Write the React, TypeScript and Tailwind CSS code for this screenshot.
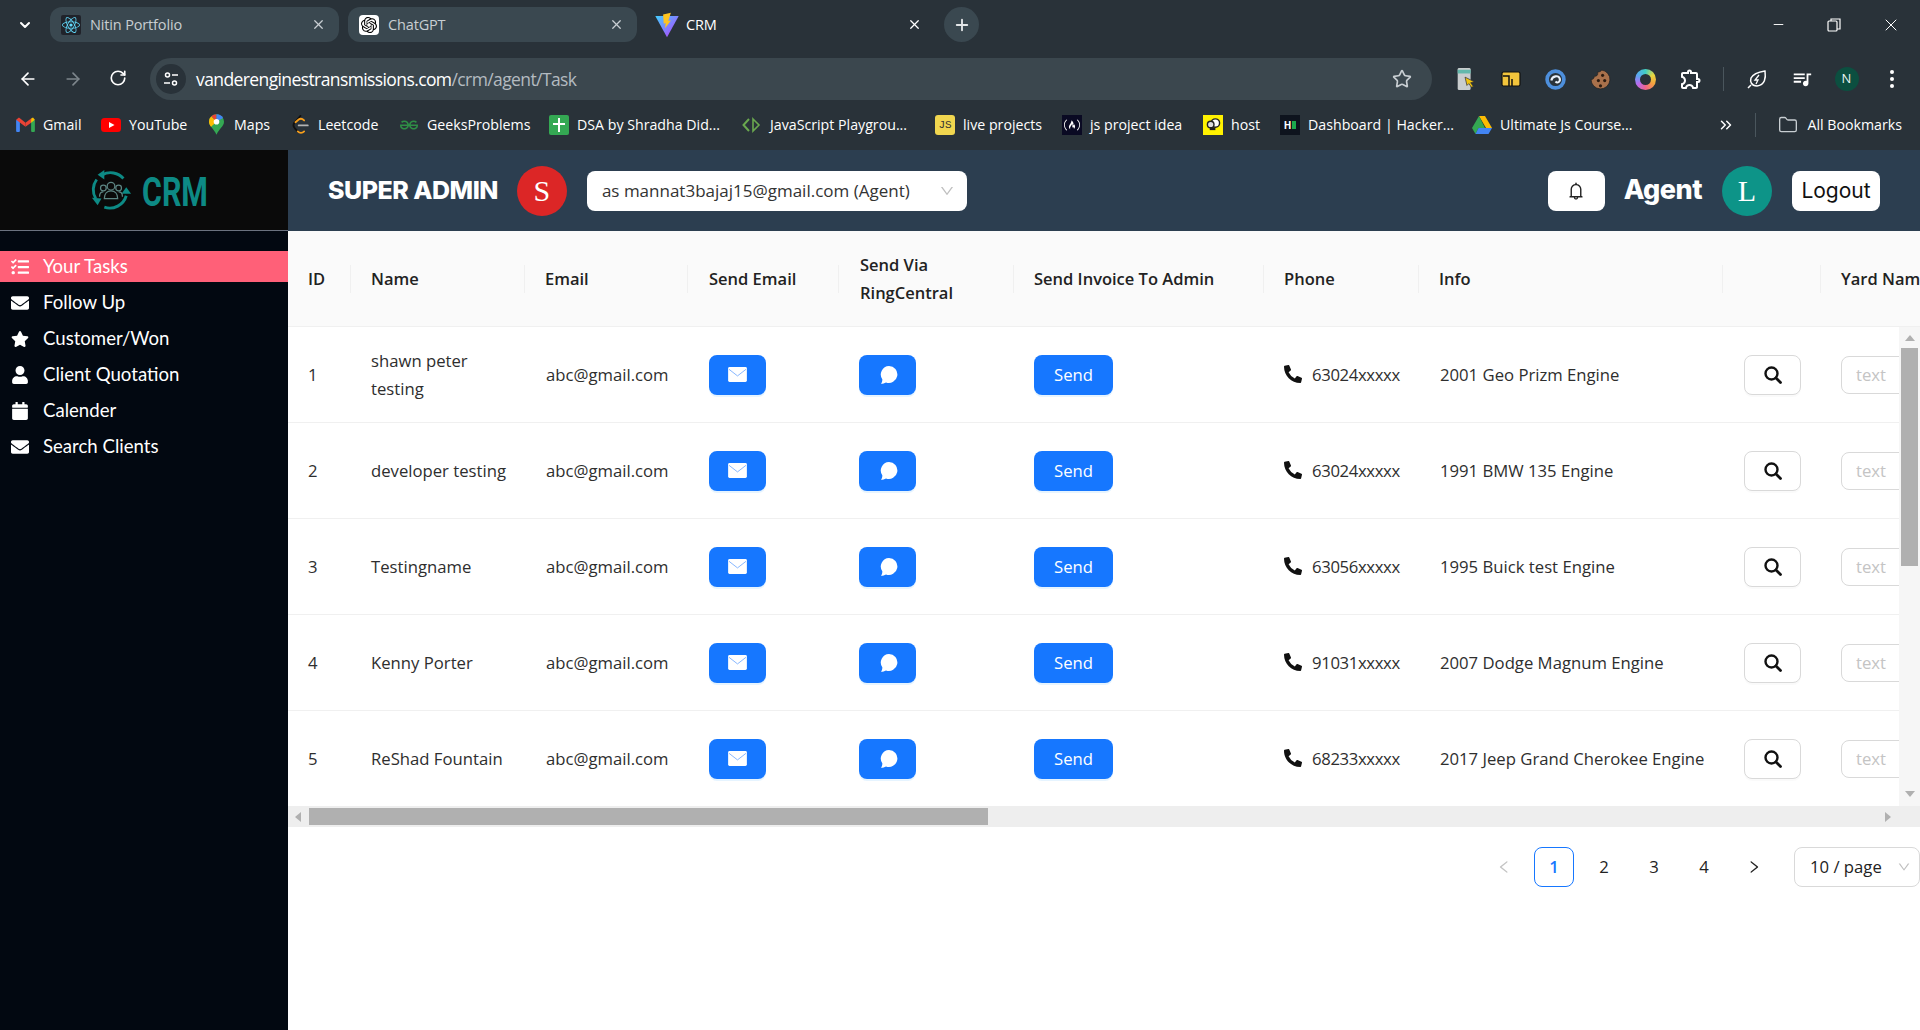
import { ArrowLeft, ArrowRight, RotateCw, X, Plus, Star, Minus, Folder, ChevronDown, ChevronsRight } from "lucide-react";
import { AiOutlineBell, AiOutlineDown, AiOutlineLeft, AiOutlineRight } from "react-icons/ai";
import { FaTasks, FaEnvelope, FaStar, FaUser, FaCalendar, FaPhoneAlt, FaReact } from "react-icons/fa";
import { MdOutlineExtension, MdQueueMusic } from "react-icons/md";
import { SiOpenai, SiGeeksforgeeks, SiFreecodecamp } from "react-icons/si";
import type { ReactNode } from "react";

const UI = "font-['Open_Sans',sans-serif]";

const rows = [
  { id: 1, name: "shawn peter testing", phone: "63024xxxxx", info: "2001 Geo Prizm Engine" },
  { id: 2, name: "developer testing", phone: "63024xxxxx", info: "1991 BMW 135 Engine" },
  { id: 3, name: "Testingname", phone: "63056xxxxx", info: "1995 Buick test Engine" },
  { id: 4, name: "Kenny Porter", phone: "91031xxxxx", info: "2007 Dodge Magnum Engine" },
  { id: 5, name: "ReShad Fountain", phone: "68233xxxxx", info: "2017 Jeep Grand Cherokee Engine" },
];

const menu = [
  { label: "Your Tasks", icon: FaTasks, active: true },
  { label: "Follow Up", icon: FaEnvelope },
  { label: "Customer/Won", icon: FaStar },
  { label: "Client Quotation", icon: FaUser },
  { label: "Calender", icon: FaCalendar },
  { label: "Search Clients", icon: FaEnvelope },
];

const GRID = "grid grid-cols-[63px_174px_163px_151px_175px_250px_155px_304px_98px_200px]";

function ViteIcon() {
  return (
    <svg viewBox="0 0 20 20" className="h-[26px] w-[26px] shrink-0">
      <defs>
        <linearGradient id="vite" x1="0" y1="0" x2="1" y2="1">
          <stop offset="0" stopColor="#41d1ff" />
          <stop offset="1" stopColor="#bd34fe" />
        </linearGradient>
      </defs>
      <polygon points="1,3 19,3 10,19.5" fill="url(#vite)" />
      <polygon points="13,0.5 7,2 7.5,9 9,8.5 8.5,12.5 13,6.5 11,6.8" fill="#ffc41f" />
    </svg>
  );
}

function GmailIcon() {
  return (
    <svg viewBox="0 0 20 16" className="h-[15px] w-[19px]">
      <rect x="0" y="3" width="4" height="13" rx="1" fill="#4285f4" />
      <rect x="16" y="3" width="4" height="13" rx="1" fill="#34a853" />
      <polygon points="0,3 3,0.5 10,6 10,10.5" fill="#ea4335" />
      <polygon points="10,6 16,1.5 16,6 10,10.5" fill="#ea4335" />
      <polygon points="16,1.5 18,0.5 20,3 16,6" fill="#fbbc04" />
    </svg>
  );
}

function YoutubeIcon() {
  return (
    <svg viewBox="0 0 20 14" className="h-[14px] w-[20px]">
      <rect width="20" height="14" rx="3.5" fill="#ff0000" />
      <polygon points="8,4 13.5,7 8,10" fill="#fff" />
    </svg>
  );
}

function MapsIcon() {
  return (
    <svg viewBox="0 0 16 22" className="h-[21px] w-[15px]">
      <path d="M8 0a8 8 0 0 0-8 8c0 5 5 7 8 14 3-7 8-9 8-14a8 8 0 0 0-8-8z" fill="#34a853" />
      <path d="M2.4 2.3A8 8 0 0 0 0 8c0 2.2 1 3.9 2.2 5.4L8 8z" fill="#fbbc04" />
      <path d="M2.4 2.3A8 8 0 0 1 8 0v8z" fill="#ea4335" />
      <path d="M8 0a8 8 0 0 1 7 4L8 8z" fill="#4285f4" />
      <circle cx="8" cy="8" r="3" fill="#fff" />
    </svg>
  );
}

function LeetcodeIcon() {
  return (
    <svg viewBox="0 0 18 22" className="h-[20px] w-[17px]" fill="none" strokeWidth="2" strokeLinecap="round">
      <path d="M9 1 L2 9" stroke="#111" />
      <path d="M2 9c-2 3 0 4 1 6l3 3" stroke="#111" />
      <path d="M6 18c2 2 5 2 7 0" stroke="#f89f1b" />
      <path d="M3.500 8 L7 5c2-1.500 4-1 6 1" stroke="#f89f1b" />
      <path d="M7 11.500 H17" stroke="#b3b3b3" />
    </svg>
  );
}

function HostIcon() {
  return (
    <div className="flex h-[20px] w-[20px] items-center justify-center bg-[#fff200]">
      <svg viewBox="0 0 16 16" className="h-[15px] w-[15px]">
        <circle cx="10" cy="6.500" r="4.500" fill="#fff" stroke="#222" strokeWidth="1.500" />
        <circle cx="5" cy="8" r="3.500" fill="#ddd" stroke="#222" strokeWidth="1.500" />
        <rect x="4" y="11" width="6" height="3" fill="#222" />
      </svg>
    </div>
  );
}

function DriveIcon() {
  return (
    <svg viewBox="0 0 20 18" className="h-[18px] w-[20px]">
      <polygon points="7,0 13,0 20,12 14,12" fill="#fbbc04" />
      <polygon points="7,0 13,12 6.500,12 3.500,18 0,12" fill="#34a853" />
      <polygon points="3.500,18 6.500,12 20,12 16.500,18" fill="#4285f4" />
    </svg>
  );
}

const bookmarks: { label: string; width: string; icon: ReactNode }[] = [
  { label: "Gmail", width: "w-[38px]", icon: <GmailIcon /> },
  { label: "YouTube", width: "w-[57px]", icon: <YoutubeIcon /> },
  { label: "Maps", width: "w-[36px]", icon: <MapsIcon /> },
  { label: "Leetcode", width: "w-[61px]", icon: <LeetcodeIcon /> },
  { label: "GeeksProblems", width: "w-[102px]", icon: <SiGeeksforgeeks className="h-[18px] w-[18px] text-[#2f8d46]" /> },
  {
    label: "DSA by Shradha Did...",
    width: "w-[145px]",
    icon: (
      <div className="relative h-[20px] w-[20px] rounded-[2px] bg-[#34a853]">
        <div className="absolute left-[9px] top-[3px] h-[14px] w-[2px] bg-white" />
        <div className="absolute left-[4px] top-[8px] h-[2px] w-[12px] bg-white" />
      </div>
    ),
  },
  {
    label: "JavaScript Playgrou...",
    width: "w-[145px]",
    icon: (
      <svg viewBox="0 0 20 20" className="h-[20px] w-[20px]" fill="none" stroke="#6aa84f" strokeWidth="2">
        <path d="M7 4 L1.500 10 L7 16" />
        <path d="M11 4 L17 10 L11 16 Z" strokeWidth="1.600" />
      </svg>
    ),
  },
  {
    label: "live projects",
    width: "w-[79px]",
    icon: (
      <div className="flex h-[20px] w-[20px] items-center justify-center rounded-[3px] bg-[#f0d64f] font-['Liberation_Mono',monospace] text-[11px] text-[#333]">
        JS
      </div>
    ),
  },
  {
    label: "js project idea",
    width: "w-[93px]",
    icon: (
      <div className="flex h-[20px] w-[20px] items-center justify-center bg-[#0a0a23]">
        <SiFreecodecamp className="h-[16px] w-[16px] text-white" />
      </div>
    ),
  },
  { label: "host", width: "w-[29px]", icon: <HostIcon /> },
  {
    label: "Dashboard | Hacker...",
    width: "w-[144px]",
    icon: (
      <div className="flex h-[20px] w-[20px] items-center justify-center gap-[1px] bg-[#0e141e]">
        <span className="text-[10px] font-bold leading-none text-white">H</span>
        <span className="h-[8px] w-[4px] bg-[#1ba94c]" />
      </div>
    ),
  },
  { label: "Ultimate Js Course...", width: "w-[133px]", icon: <DriveIcon /> },
];

function ExtIcon({ children }: { children: ReactNode }) {
  return <div className="flex h-[42px] w-[45px] items-center justify-center">{children}</div>;
}

function Tab({ title, icon, active }: { title: string; icon: ReactNode; active?: boolean }) {
  return (
    <div className={`flex h-[35px] w-[289px] items-center rounded-[12px] pl-[11px] pr-[13px] ${active ? "" : "bg-[#3a4850]"}`}>
      <div className="flex w-[20px] items-center justify-center">{icon}</div>
      <span className={`ml-[9px] flex-1 text-[14.500px] tracking-[-0.15px] ${active ? "text-white" : "text-[#c8ced2]"}`}>{title}</span>
      <X className={`h-[15px] w-[15px] ${active ? "text-white" : "text-[#c8ced2]"}`} strokeWidth={2} />
    </div>
  );
}

function BrowserChrome() {
  return (
    <div className={`h-[150px] shrink-0 bg-[#293239] pt-[7px] ${UI}`}>
      <div className="flex h-[35px] items-center">
        <div className="flex w-[50px] items-center justify-center">
          <ChevronDown className="h-[16px] w-[16px] text-white" strokeWidth={3} />
        </div>
        <div className="flex gap-[9px]">
          <Tab
            title="Nitin Portfolio"
            icon={
              <div className="flex h-[20px] w-[20px] items-center justify-center rounded-[2px] bg-[#20232a]">
                <FaReact className="h-[18px] w-[18px] text-[#61dafb]" />
              </div>
            }
          />
          <Tab
            title="ChatGPT"
            icon={
              <div className="flex h-[20px] w-[20px] items-center justify-center rounded-[4px] bg-white">
                <SiOpenai className="h-[16px] w-[16px] text-black" />
              </div>
            }
          />
          <Tab title="CRM" icon={<ViteIcon />} active />
        </div>
        <div className="ml-[9px] flex h-[35px] w-[35px] items-center justify-center rounded-full bg-[#3a4850]">
          <Plus className="h-[18px] w-[18px] text-[#e3e6e8]" strokeWidth={2.500} />
        </div>
        <div className="ml-auto flex items-center text-white">
          <div className="flex w-[56px] justify-center">
            <Minus className="h-[15px] w-[15px]" strokeWidth={1.500} />
          </div>
          <div className="flex w-[56px] justify-center">
            <svg viewBox="0 0 14 14" className="h-[14px] w-[14px]" fill="none" stroke="currentColor" strokeWidth="1.200">
              <rect x="1" y="3" width="9" height="10" rx="1" />
              <path d="M4 3V1h9v10h-3" />
            </svg>
          </div>
          <div className="flex w-[58px] justify-center">
            <X className="h-[20px] w-[20px]" strokeWidth={1.200} />
          </div>
        </div>
      </div>

      <div className="mt-[16px] flex h-[42px] items-center">
        <div className="flex w-[150px] pl-[5px] text-white">
          <div className="flex w-[45px] justify-center">
            <ArrowLeft className="h-[20px] w-[20px]" strokeWidth={2} />
          </div>
          <div className="flex w-[45px] justify-center">
            <ArrowRight className="h-[20px] w-[20px] text-[#7d868c]" strokeWidth={2} />
          </div>
          <div className="flex w-[45px] justify-center">
            <RotateCw className="h-[18px] w-[18px]" strokeWidth={2.200} />
          </div>
        </div>
        <div className="flex h-[42px] w-[1282px] items-center rounded-full bg-[#3b474e] pl-[6px] pr-[20px]">
          <div className="flex h-[30px] w-[30px] items-center justify-center rounded-full bg-[#293239]">
            <svg viewBox="0 0 16 16" className="h-[16px] w-[16px]" fill="none" stroke="#fff" strokeWidth="1.500">
              <circle cx="4.500" cy="4" r="2" />
              <path d="M9 4h6M1 12h6" />
              <circle cx="11.500" cy="12" r="2" />
            </svg>
          </div>
          <span className="ml-[10px] flex-1 text-[17.500px] tracking-[-0.6px] text-white">
            vanderenginestransmissions.com<span className="text-[#b4bbc0]">/crm/agent/Task</span>
          </span>
          <Star className="h-[20px] w-[20px] text-[#c8ced2]" strokeWidth={2} />
        </div>
        <div className="ml-[11px] flex items-center">
          <ExtIcon>
            <svg viewBox="0 0 20 26" className="h-[24px] w-[20px]">
              <rect x="1" y="1" width="14" height="24" rx="1.500" fill="#c9cdce" />
              <rect x="1" y="3" width="14" height="4" fill="#63b8ab" />
              <polygon points="9,11 19,16 15,17 18,21 16,22 13,18 11,20" fill="#f2c40f" stroke="#333" strokeWidth="0.800" />
            </svg>
          </ExtIcon>
          <ExtIcon>
            <svg viewBox="0 0 20 16" className="h-[16px] w-[20px]">
              <rect x="1" y="1" width="18" height="14" rx="1.500" fill="#f3c53c" stroke="#111" strokeWidth="1.200" />
              <path d="M2 5h6v10M11 15V8" fill="none" stroke="#111" strokeWidth="1.500" />
            </svg>
          </ExtIcon>
          <ExtIcon>
            <svg viewBox="0 0 20 20" className="h-[21px] w-[21px]" fill="none">
              <circle cx="10" cy="10" r="8" stroke="#4d8fdc" strokeWidth="3.500" />
              <path d="M6 11c1-5 7-5 8-2s-2 5-4 3" stroke="#e8f1fb" strokeWidth="2" />
            </svg>
          </ExtIcon>
          <ExtIcon>
            <svg viewBox="0 0 20 20" className="h-[21px] w-[21px]">
              <path d="M11 1a9 9 0 1 1-10 9c2 0 3-1 3-3 3 0 4-2 3-4 2 0 4-1 4-2z" fill="#a9714b" stroke="#222" strokeWidth="0.700" />
              <circle cx="12" cy="6" r="1.500" fill="#2c1b10" />
              <circle cx="8" cy="11" r="1.500" fill="#2c1b10" />
              <circle cx="14" cy="11" r="1.500" fill="#2c1b10" />
              <circle cx="10" cy="16" r="1.500" fill="#2c1b10" />
            </svg>
          </ExtIcon>
          <ExtIcon>
            <div className="flex h-[21px] w-[21px] items-center justify-center rounded-full bg-[conic-gradient(#3fcfc4,#e8d83e,#f4a13f,#f0648c,#b56cf0,#5aa8f0,#3fcfc4)]">
              <div className="h-[11px] w-[11px] rounded-full bg-[#293239]" />
            </div>
          </ExtIcon>
          <ExtIcon>
            <MdOutlineExtension className="h-[24px] w-[24px] text-white" />
          </ExtIcon>
          <div className="ml-[10px] mr-[10px] h-[24px] w-px bg-[#4a565d]" />
          <ExtIcon>
            <svg viewBox="0 0 20 20" className="h-[20px] w-[20px]" fill="none" stroke="#fff" strokeWidth="1.500">
              <path d="M18 2c1 7 0 14-8 15-6 0-7-5-6-8 2-4 8-6 14-7zM1 19l3-3" />
              <path d="M12 6 L8 11h3l-2 4" strokeWidth="1.300" />
            </svg>
          </ExtIcon>
          <ExtIcon>
            <MdQueueMusic className="h-[22px] w-[22px] text-white" />
          </ExtIcon>
          <ExtIcon>
            <div className="flex h-[24px] w-[24px] items-center justify-center rounded-full bg-[#0c4f40] text-[13px] text-[#e8f3f0]">N</div>
          </ExtIcon>
          <ExtIcon>
            <div className="flex flex-col gap-[3px]">
              <span className="h-[4px] w-[4px] rounded-full bg-white" />
              <span className="h-[4px] w-[4px] rounded-full bg-white" />
              <span className="h-[4px] w-[4px] rounded-full bg-white" />
            </div>
          </ExtIcon>
        </div>
      </div>

      <div className="mt-[10px] flex h-[30px] items-center pl-[15px] pr-[18px] text-[14.200px] text-white">
        <div className="flex items-center gap-[20px]">
          {bookmarks.map((b) => (
            <div key={b.label} className="flex items-center gap-[8px]">
              <div className="flex w-[20px] items-center justify-center">{b.icon}</div>
              <span className={`whitespace-nowrap ${b.width}`}>{b.label}</span>
            </div>
          ))}
        </div>
        <div className="ml-auto flex items-center">
          <ChevronsRight className="h-[18px] w-[18px]" strokeWidth={2} />
          <div className="ml-[20px] h-[24px] w-px bg-[#4a565d]" />
          <Folder className="ml-[21px] h-[20px] w-[22px] text-[#c8ced2]" strokeWidth={1.600} />
          <span className="ml-[8px] whitespace-nowrap">All Bookmarks</span>
        </div>
      </div>
    </div>
  );
}

function LogoMark() {
  return (
    <svg viewBox="0 0 44 44" className="h-[42px] w-[42px] shrink-0" fill="none">
      <g stroke="#0d8a85" strokeWidth="3">
        <path d="M13 6a18 18 0 0 1 22 4" />
        <path d="M7 11a18 18 0 0 0-1 20" />
        <path d="M15 40a18 18 0 0 0 23-12" />
      </g>
      <polygon points="15,1 15,11 8,6" fill="#0d8a85" />
      <polygon points="38,19 43,26 33,26" fill="#0d8a85" />
      <polygon points="2,30 12,31 8,38" fill="#0d8a85" />
      <g stroke="#5d8583" strokeWidth="1.300">
        <circle cx="22" cy="18" r="4" />
        <path d="M15 31c0-5 3-8 7-8s7 3 7 8z" />
        <circle cx="14" cy="20" r="3" />
        <circle cx="30" cy="20" r="3" />
        <path d="M10 29c0-3 1-5 4-5M34 29c0-3-1-5-4-5" />
      </g>
    </svg>
  );
}

function Sidebar() {
  return (
    <aside className="flex w-[288px] shrink-0 flex-col bg-[#020811]">
      <div className="flex h-[81px] items-center border-b border-[#6b7280] bg-[#0a0a0a] pl-[90px]">
        <LogoMark />
        <span className="ml-[10px] mt-[5px] w-[63px] origin-left scale-x-[0.76] font-['Roboto',sans-serif] text-[40px] font-bold leading-none text-[#0d8a85]">CRM</span>
      </div>
      <nav className="mt-[20px] flex flex-col gap-[5px] font-['Lato',sans-serif] text-[18.600px] text-white">
        {menu.map((m) => (
          <div key={m.label} className={`flex h-[31px] items-center pl-[11px] ${m.active ? "bg-[#ff6078]" : ""}`}>
            <div className="flex w-[18px] items-center justify-center">
              <m.icon className="h-[18px] w-[18px]" />
            </div>
            <span className="ml-[14px]">{m.label}</span>
          </div>
        ))}
      </nav>
    </aside>
  );
}

function TopBar() {
  return (
    <header className="flex h-[81px] shrink-0 items-center bg-[#2c3e50] pl-[40px] pr-[40px]">
      <span className="font-['Inter',sans-serif] text-[25px] font-extrabold tracking-[-0.5px] text-white">SUPER ADMIN</span>
      <div className="ml-[19px] flex h-[50px] w-[50px] items-center justify-center rounded-full bg-[#dc2626] font-['Liberation_Serif',serif] text-[30px] text-white">S</div>
      <div className={`ml-[20px] flex h-[40px] w-[380px] items-center justify-between rounded-lg bg-white pl-[15px] pr-[12px] text-[17px] text-[#333] ${UI}`}>
        <span>as mannat3bajaj15@gmail.com (Agent)</span>
        <AiOutlineDown className="h-[16px] w-[16px] text-[#bfbfbf]" />
      </div>
      <div className="ml-auto flex h-[40px] w-[57px] items-center justify-center rounded-lg bg-white">
        <AiOutlineBell className="h-[20px] w-[20px] text-[#222]" />
      </div>
      <span className="ml-[19px] font-['Inter',sans-serif] text-[27px] font-extrabold tracking-[-0.5px] text-white">Agent</span>
      <div className="ml-[20px] flex h-[50px] w-[50px] items-center justify-center rounded-full bg-[#0d9488] font-['Liberation_Serif',serif] text-[30px] text-white">L</div>
      <div className="ml-[20px] flex h-[40px] w-[88px] items-center justify-center rounded-lg bg-white font-['Inter',sans-serif] text-[21px] text-[#111]">Logout</div>
    </header>
  );
}

function HeadCell({ children, last, indent }: { children?: ReactNode; last?: boolean; indent?: boolean }) {
  return (
    <div className={`flex items-center justify-between ${indent ? "pl-[21px]" : "pl-[20px]"}`}>
      <span className="text-[16.500px] font-semibold leading-[28px] text-[#222]">{children}</span>
      {!last && <span className="h-[28px] w-px shrink-0 bg-[#f0f0f0]" />}
    </div>
  );
}

function BlueButton({ children }: { children: ReactNode }) {
  return (
    <button className="flex h-[40px] w-[57px] items-center justify-center rounded-lg bg-[#1677ff] text-white shadow-[0_2px_0_rgba(5,145,255,0.1)]">
      {children}
    </button>
  );
}

function MailGlyph() {
  return (
    <svg viewBox="0 0 20 16" className="h-[15px] w-[19px]">
      <rect width="20" height="16" rx="1.500" fill="#fff" />
      <path d="M1 2.500 L10 9.500 L19 2.500" fill="none" stroke="#7fb2ff" strokeWidth="1" />
    </svg>
  );
}

function ChatGlyph() {
  return (
    <svg viewBox="0 0 20 20" className="h-[20px] w-[20px]">
      <path d="M11 1a8.500 8.500 0 1 1-3 16.500c-1.500.8-3.200 1.300-5 1.300 1-1.300 1.500-2.800 1.300-4.500A8.500 8.500 0 0 1 11 1z" fill="#fff" />
    </svg>
  );
}

function SearchGlyph() {
  return (
    <svg viewBox="0 0 18 18" className="h-[18px] w-[18px]" fill="none" stroke="#111">
      <circle cx="7.500" cy="7.500" r="6" strokeWidth="2.400" />
      <path d="M12 12 L16.500 16.500" strokeWidth="2.800" strokeLinecap="round" />
    </svg>
  );
}

function TaskTable() {
  return (
    <div className={`${UI} min-w-0`}>
      <div className={`${GRID} h-[96px] overflow-hidden border-b border-[#f0f0f0] bg-[#fafafa]`}>
        <HeadCell>ID</HeadCell>
        <HeadCell>Name</HeadCell>
        <HeadCell>Email</HeadCell>
        <HeadCell indent>Send Email</HeadCell>
        <HeadCell indent>
          Send Via
          <br />
          RingCentral
        </HeadCell>
        <HeadCell>Send Invoice To Admin</HeadCell>
        <HeadCell>Phone</HeadCell>
        <HeadCell>Info</HeadCell>
        <HeadCell />
        <HeadCell last>
          <span className="whitespace-nowrap">Yard Name</span>
        </HeadCell>
      </div>
      <div className="flex h-[479px] overflow-hidden">
        <div className="w-[1611px] overflow-hidden">
          {rows.map((r) => (
            <div key={r.id} className={`${GRID} h-[96px] items-center border-b border-[#f0f0f0] text-[16.700px] leading-[28px] text-[#2e2e2e]`}>
              <div className="pl-[20px]">{r.id}</div>
              <div className="pl-[20px] pr-[4px]">{r.name}</div>
              <div className="pl-[21px]">abc@gmail.com</div>
              <div className="pl-[21px]">
                <BlueButton>
                  <MailGlyph />
                </BlueButton>
              </div>
              <div className="pl-[20px]">
                <BlueButton>
                  <ChatGlyph />
                </BlueButton>
              </div>
              <div className="pl-[20px]">
                <button className="h-[40px] w-[79px] rounded-lg bg-[#1677ff] text-white shadow-[0_2px_0_rgba(5,145,255,0.1)]">Send</button>
              </div>
              <div className="flex items-center pl-[20px]">
                <FaPhoneAlt className="mb-[2px] h-[18px] w-[18px] text-[#111]" />
                <span className="ml-[10px] tracking-[-0.35px]">{r.phone}</span>
              </div>
              <div className="pl-[21px] whitespace-nowrap">{r.info}</div>
              <div className="pl-[21px]">
                <button className="flex h-[40px] w-[57px] items-center justify-center rounded-lg border border-[#d9d9d9] bg-white shadow-[0_2px_0_rgba(0,0,0,0.02)]">
                  <SearchGlyph />
                </button>
              </div>
              <div className="pl-[20px]">
                <input
                  readOnly
                  placeholder="text"
                  className="h-[38px] w-[100px] rounded-lg border border-[#d9d9d9] bg-white pl-[14px] placeholder:text-[#c4c4c4]"
                />
              </div>
            </div>
          ))}
        </div>
        <div className="flex w-[21px] shrink-0 flex-col items-center bg-[#f6f6f6]">
          <div className="mt-[8px] h-0 w-0 border-x-[5px] border-b-[6px] border-x-transparent border-b-[#b0b0b0]" />
          <div className="mt-[7px] h-[218px] w-[17px] bg-[#b0b0b0]" />
          <div className="mt-[225px] h-0 w-0 border-x-[5px] border-t-[6px] border-x-transparent border-t-[#b0b0b0]" />
        </div>
      </div>
      <div className="flex h-[21px] items-center bg-[#eeeeee]">
        <div className="ml-[7px] h-0 w-0 border-y-[5px] border-r-[6px] border-y-transparent border-r-[#b0b0b0]" />
        <div className="ml-[8px] h-[17px] w-[679px] bg-[#b0b0b0]" />
        <div className="ml-[897px] h-0 w-0 border-y-[5px] border-l-[6px] border-y-transparent border-l-[#b0b0b0]" />
      </div>
    </div>
  );
}

function Pagination() {
  return (
    <div className={`mt-[20px] flex justify-end gap-[10px] text-[16.700px] text-[#222] ${UI}`}>
      <div className="flex h-[40px] w-[40px] items-center justify-center">
        <AiOutlineLeft className="h-[16px] w-[16px] text-[#c4c4c4]" />
      </div>
      {[1, 2, 3, 4].map((p) => (
        <div
          key={p}
          className={`flex h-[40px] w-[40px] items-center justify-center rounded-lg ${p === 1 ? "border border-[#1677ff] font-semibold text-[#1677ff]" : ""}`}
        >
          {p}
        </div>
      ))}
      <div className="flex h-[40px] w-[40px] items-center justify-center">
        <AiOutlineRight className="h-[16px] w-[16px] text-[#222]" />
      </div>
      <div className="ml-[10px] flex h-[40px] w-[126px] items-center justify-between rounded-lg border border-[#d9d9d9] pl-[15px] pr-[8px]">
        <span>10 / page</span>
        <AiOutlineDown className="h-[14px] w-[14px] text-[#bfbfbf]" />
      </div>
    </div>
  );
}

export default function App() {
  return (
    <div className="flex h-screen flex-col overflow-hidden bg-white">
      <BrowserChrome />
      <div className="flex min-h-0 flex-1">
        <Sidebar />
        <main className="flex min-w-0 flex-1 flex-col">
          <TopBar />
          <TaskTable />
          <Pagination />
        </main>
      </div>
    </div>
  );
}
